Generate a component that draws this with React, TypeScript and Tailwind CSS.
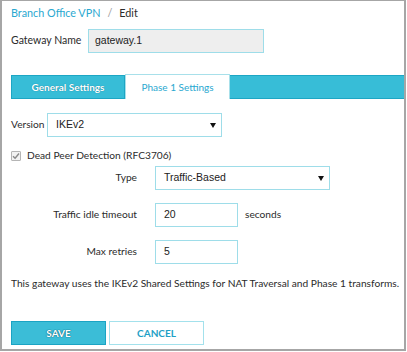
import React from "react";

const labelFont = { fontFamily: 'Lato, "Noto Sans", sans-serif' };
const inputFont = { fontFamily: '"Liberation Sans", Arial, sans-serif' };

function Caret() {
  return (
    <svg width="6" height="5" viewBox="0 0 6 5" className="shrink-0">
      <path d="M0 0 L6 0 L3 5 Z" fill="#111" />
    </svg>
  );
}

function Select({ value, w }: { value: string; w: string }) {
  return (
    <div
      className={`${w} h-[24px] border border-[#9edde9] bg-white flex items-center justify-between pl-[8px] pr-[5px] text-[10.5px] text-[#222]`}
      style={inputFont}
    >
      <span>{value}</span>
      <Caret />
    </div>
  );
}

function TextBox({ value }: { value: string }) {
  return (
    <div
      className="w-[83px] h-[24px] border border-[#9edde9] bg-white flex items-center pl-[8px] text-[10.5px] text-[#222]"
      style={inputFont}
    >
      {value}
    </div>
  );
}

export default function App() {
  return (
    <div
      className="w-[406px] h-[351px] bg-white border-l-2 border-t border-r-2 border-b-2 border-[#a6a6a6] text-[10.2px] text-[#2b2b2b] flex flex-col pl-[9px] whitespace-nowrap overflow-hidden"
      style={labelFont}
    >
      {/* breadcrumb */}
      <div className="mt-[4px] h-[16px] flex items-center gap-[7px] text-[10.8px]">
        <span className="text-[#2aa8d0]">Branch Office VPN</span>
        <span className="text-[#999]">/</span>
        <span>Edit</span>
      </div>

      {/* gateway name */}
      <div className="mt-[8px] flex items-center text-[10.5px]">
        <span className="w-[77px]">Gateway Name</span>
        <div
          className="w-[176px] h-[24px] border border-[#9edde9] bg-[#eeeeee] flex items-center pl-[6px] text-[10.5px] text-[#222]"
          style={inputFont}
        >
          gateway.1
        </div>
      </div>

      {/* tabs */}
      <div className="mt-[21px] flex h-[25px] items-end">
        <div className="w-[114px] h-[24px] bg-[#37bdd7] border border-[#1da6c4] flex items-center justify-center text-white font-bold text-[10px] [text-shadow:0_0_1px_#0c6f88]">
          General Settings
        </div>
        <div className="w-[105px] h-[25px] bg-white border-t border-l border-r border-[#a8e0ea] flex items-center justify-center text-[#2aa8d0] text-[10px]">
          Phase 1 Settings
        </div>
        <div className="flex-1 h-[24px] bg-[#37bdd7] border-t border-b border-[#1da6c4]" />
      </div>

      {/* version */}
      <div className="mt-[14px] flex items-center">
        <span className="w-[36px]">Version</span>
        <Select value="IKEv2" w="w-[175px]" />
      </div>

      {/* dead peer */}
      <div className="mt-[11px] h-[16px] flex items-center">
        <span className="w-[10px] h-[10px] border border-[#b5b5b5] bg-[#f2f2f2] rounded-[1px] flex items-center justify-center">
          <svg width="8" height="8" viewBox="0 0 8 8">
            <path d="M1 4.2 L3.1 6.3 L7 1.5" stroke="#8a8a8a" strokeWidth="1.4" fill="none" />
          </svg>
        </span>
        <span className="ml-[6px]">Dead Peer Detection (RFC3706)</span>
      </div>

      {/* type */}
      <div className="mt-[2px] flex items-center">
        <span className="w-[127px] text-right pr-[1px]">Type</span>
        <div className="ml-[17px]">
          <Select value="Traffic-Based" w="w-[175px]" />
        </div>
      </div>

      {/* traffic idle */}
      <div className="mt-[13px] flex items-center">
        <span className="w-[127px] text-right pr-[1px]">Traffic idle timeout</span>
        <div className="ml-[17px]">
          <TextBox value="20" />
        </div>
        <span className="ml-[7px]">seconds</span>
      </div>

      {/* max retries */}
      <div className="mt-[13px] flex items-center">
        <span className="w-[127px] text-right pr-[1px]">Max retries</span>
        <div className="ml-[17px]">
          <TextBox value="5" />
        </div>
      </div>

      <p className="mt-[11px] h-[16px] leading-[16px]">
        This gateway uses the IKEv2 Shared Settings for NAT Traversal and Phase 1 transforms.
      </p>

      {/* buttons */}
      <div className="mt-[30px] flex gap-[3px]">
        <button className="w-[95px] h-[24px] bg-[#3bbdd7] border border-[#1ba3c3] text-white font-bold text-[10px] [text-shadow:0_0_1px_#0b5f77,0_0_1px_#0b5f77]">
          SAVE
        </button>
        <button className="w-[95px] h-[24px] bg-white border border-[#a3e1ec] text-[#1f9fc6] font-bold text-[10px]">
          CANCEL
        </button>
      </div>
    </div>
  );
}
